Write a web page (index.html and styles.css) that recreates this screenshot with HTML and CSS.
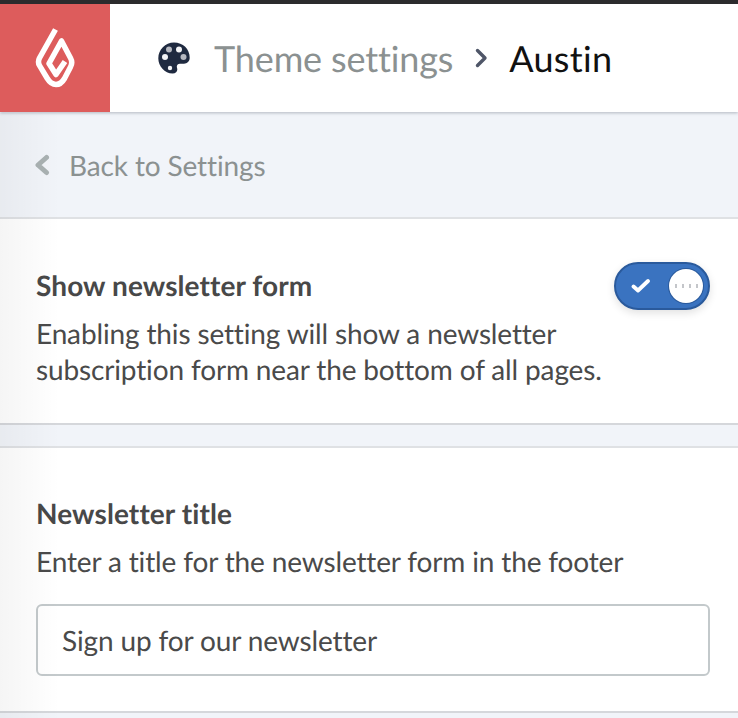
FILE: index.html
```html
<!DOCTYPE html>
<html lang="en">
<head>
  <meta charset="UTF-8">
  <meta name="viewport" content="width=device-width, initial-scale=1.0">
  <title>Theme settings</title>
  <link rel="stylesheet" href="styles.css">
</head>
<body>
  <header class="topbar">
    <div class="logo">
      <svg width="40" height="60" viewBox="0 0 40 60" fill="none" stroke="#fff" stroke-width="5.500" stroke-linejoin="round">
        <path d="M20.500 1.500 L4.500 30 Q2.500 34 4.500 37.500 L12 50 Q16 56.500 21 56.500 Q26 56.500 29.500 50.500 L35.500 39 Q38 34.500 35.500 30 L26.500 13 L14 35.500 L21 46.500 L30 33.500"/>
      </svg>
    </div>
    <svg class="palette" width="32" height="32" viewBox="0 0 32 32">
      <path fill="#1f2a40" d="M16 .5C7.200.5.300 7.600.300 16.300c0 8 6.300 15.200 14.300 15.200 3.100 0 4.700-1.700 4.700-4 0-1.200-.5-2-.5-3 0-1.600 1.300-2.800 3-2.800h4.200c3 0 5.700-2.200 5.700-5.900C31.700 7 25 .5 16 .5z"/>
      <circle cx="11" cy="7.500" r="3" fill="#b6b9c1"/>
      <circle cx="21" cy="7.500" r="3" fill="#f4f5f7"/>
      <circle cx="7" cy="15" r="3" fill="#f4f5f7"/>
      <circle cx="25.500" cy="15" r="3" fill="#b6b9c1"/>
      <circle cx="12" cy="26" r="2.200" fill="#f4f5f7"/>
    </svg>
    <span class="crumb">Theme settings</span>
    <svg class="crumb-sep" width="13" height="20" viewBox="0 0 13 20" fill="none" stroke="#4f5668" stroke-width="3.400" stroke-linecap="round" stroke-linejoin="round">
      <path d="M2.500 2.500 L10 10 L2.500 17.500"/>
    </svg>
    <span class="crumb-current">Austin</span>
  </header>

  <nav class="subnav">
    <svg width="16" height="22" viewBox="0 0 16 22" fill="none" stroke="#a9b1b2" stroke-width="5" stroke-linecap="round" stroke-linejoin="round">
      <path d="M12.500 3.500 L4 11 L12.500 18.500"/>
    </svg>
    <a class="back-link" href="#">Back to Settings</a>
  </nav>

  <section class="card card-toggle">
    <div class="card-text">
      <h2>Show newsletter form</h2>
      <p>Enabling this setting will show a newsletter subscription form near the bottom of all pages.</p>
    </div>
    <div class="toggle">
      <svg width="20" height="16" viewBox="0 0 20 16" fill="none" stroke="#fff" stroke-width="3.800" stroke-linecap="round" stroke-linejoin="round">
        <path d="M2.500 8.500 L7 12.500 L17 3"/>
      </svg>
      <span class="knob"><i></i><i></i><i></i><i></i></span>
    </div>
  </section>

  <section class="card card-field">
    <h2>Newsletter title</h2>
    <p>Enter a title for the newsletter form in the footer</p>
    <input class="text-input" type="text" value="Sign up for our newsletter">
  </section>

  <div class="side-shade"></div>
</body>
</html>
```

FILE: styles.css
```css
html, body {
  height: 100%;
}
body {
  margin: 0;
  height: 718px;
  overflow: hidden;
  background-color: #f1f4f9;
  font-family: Lato, "Open Sans", sans-serif;
  font-variant-ligatures: none;
  text-rendering: geometricPrecision;
  color: #4a4a4a;
}
.topbar {
  display: flex;
  align-items: center;
  height: 108px;
  background: #fff;
  border-top: 4px solid #2b2b2d;
  box-shadow: 0 1px 3px rgba(60, 70, 90, 0.35);
  position: relative;
}
.logo {
  width: 110px;
  height: 108px;
  background: #dd5c5c;
  display: flex;
  align-items: center;
  justify-content: center;
  margin-right: 48px;
}
.palette {
  margin-right: 24px;
}
.crumb {
  font-size: 36px;
  letter-spacing: -0.14px;
  color: #8b9191;
}
.crumb-sep {
  margin: 0 21px 0 22px;
}
.crumb-current {
  font-size: 36px;
  letter-spacing: 0.3px;
  color: #111;
}
.subnav {
  display: flex;
  align-items: center;
  height: 107px;
  padding-left: 34px;
  border-bottom: 2px solid #dfe1e4;
  box-sizing: border-box;
}
.back-link {
  margin-left: 19px;
  font-size: 28px;
  letter-spacing: -0.13px;
  color: #8b9191;
  text-decoration: none;
}
.card {
  background: #fff;
  padding: 0 28px 0 36px;
  box-sizing: border-box;
  border-bottom: 2px solid #d5d7db;
}
.card h2 {
  margin: 0 0 12px;
  font-size: 28px;
  line-height: 36px;
  font-weight: 700;
  letter-spacing: 0.1px;
  color: #484848;
}
.card p {
  margin: 0;
  font-size: 28px;
  line-height: 36px;
  letter-spacing: -0.14px;
  color: #4a4a4a;
}
.card-toggle {
  display: flex;
  justify-content: space-between;
  height: 206px;
  padding-top: 48px;
}
.card-text {
  width: 575px;
}
.toggle {
  width: 96px;
  height: 48px;
  box-sizing: border-box;
  margin-top: -5px;
  padding: 0 5px 0 15px;
  display: flex;
  align-items: center;
  justify-content: space-between;
  background: #3a73c0;
  border: 2px solid #2a5a9c;
  border-radius: 24px;
  box-shadow: 0 3px 8px rgba(0, 0, 0, 0.12);
}
.knob {
  width: 34px;
  height: 34px;
  box-sizing: border-box;
  display: flex;
  align-items: center;
  justify-content: center;
  gap: 5px;
  background: #fff;
  border-radius: 50%;
  box-shadow: 0 0 0 1px #2a5a9c;
}
.knob i {
  width: 2px;
  height: 4px;
  background: #c4c6ca;
}
.card-field {
  margin-top: 21px;
  height: 267px;
  padding-top: 47px;
  border-top: 2px solid #dfe1e4;
}
.text-input {
  display: block;
  width: 100%;
  height: 72px;
  margin-top: 25px;
  padding: 0 24px;
  box-sizing: border-box;
  border: 2px solid #c3c9cb;
  border-radius: 6px;
  font-family: inherit;
  font-size: 28px;
  font-variant-ligatures: none;
  text-rendering: geometricPrecision;
  letter-spacing: -0.13px;
  color: #4a4a4a;
  background: #fff;
}
.side-shade {
  position: absolute;
  top: 113px;
  left: 0;
  bottom: 0;
  width: 60px;
  background: linear-gradient(to right, rgba(0, 0, 0, 0.04), rgba(0, 0, 0, 0));
  pointer-events: none;
}
```
